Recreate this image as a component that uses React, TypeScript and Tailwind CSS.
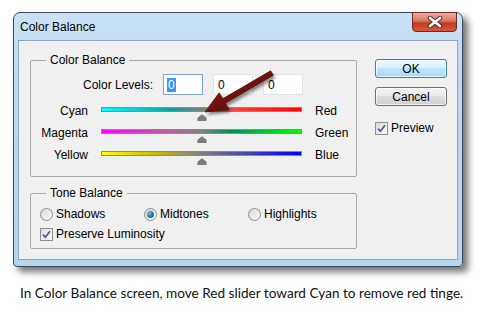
import React from 'react';

const Thumb: React.FC = () => (
  <svg width="10" height="7" viewBox="0 0 10 7" className="mx-auto mt-[2px] block">
    <path d="M5 0.3 L9.3 3.6 Q9.6 3.9 9.6 4.4 V7 H0.4 V4.4 Q0.4 3.9 0.7 3.6 Z" fill="#7c7c7c" />
  </svg>
);

const Check: React.FC = () => (
  <span className="flex h-[13px] w-[13px] items-center justify-center border border-[#8e8f8f] bg-gradient-to-br from-[#dcdcdc] to-[#fbfbfb]">
    <svg width="9" height="9" viewBox="0 0 9 9">
      <path d="M1 4.6 L3.4 7.2 L8 1.2" fill="none" stroke="#4a5f97" strokeWidth="1.8" />
    </svg>
  </span>
);

const Radio: React.FC<{ on?: boolean }> = ({ on }) => (
  <span className="flex h-[13px] w-[13px] items-center justify-center rounded-full border border-[#8e8f8f] bg-gradient-to-br from-[#d8d8d8] to-[#fafafa]">
    {on && <span className="h-[7px] w-[7px] rounded-full bg-[radial-gradient(circle_at_35%_35%,#7ec3e8,#1d6a92_60%,#0f4466)]" />}
  </span>
);

const sliders = [
  { left: 'Cyan', right: 'Red', bar: 'bg-[linear-gradient(to_right,#00ffff,#0e9e9e_35%,#808080_52%,#ff3a3a_68%,#ff0000)]' },
  { left: 'Magenta', right: 'Green', bar: 'bg-[linear-gradient(to_right,#ff00ff,#c05aa6_30%,#808080_50%,#00905a_65%,#00ff00)]' },
  { left: 'Yellow', right: 'Blue', bar: 'bg-[linear-gradient(to_right,#ffff00,#c8c000_25%,#808080_50%,#4a4aa8_70%,#0000ff)]' },
];

const App: React.FC = () => {
  return (
    <div className="relative h-[330px] w-[500px] overflow-hidden bg-white font-['Liberation_Sans',Arial,sans-serif] text-[12px] text-black">
      {/* Dialog window */}
      <div className="ml-[13px] mt-[12px] flex h-[255px] w-[450px] flex-col rounded-t-[7px] rounded-b-[4px] border border-[#3f4a56] bg-[linear-gradient(to_bottom,#c9e2f7,#bcd9f2_30%,#b6d5f0)] shadow-[5px_5px_7px_rgba(0,0,0,0.55)]">
        {/* Title bar */}
        <div className="flex h-[27px] items-start justify-between">
          <span className="pl-[6px] pt-[7px] leading-[14px]">Color Balance</span>
          <div className="mr-[5px] mt-[-1px] flex h-[20px] w-[45px] items-center justify-center rounded-b-[4px] border border-[#6e2a22] bg-[linear-gradient(to_bottom,#eab0a2,#d9715d_45%,#c53a22_55%,#d5573c)]">
            <svg width="16" height="12" viewBox="0 0 16 12">
              <path d="M3 2 L13 10 M13 2 L3 10" stroke="#4a2a26" strokeWidth="4.4" strokeLinecap="round" />
              <path d="M3 2 L13 10 M13 2 L3 10" stroke="#ffffff" strokeWidth="2.6" strokeLinecap="round" />
            </svg>
          </div>
        </div>

        {/* Client area */}
        <div className="mx-[4px] flex h-[220px] border border-[#8fa8c0] bg-[#f0f0f0] pl-[11px] pt-[12px]">
          <div className="flex w-[327px] flex-col">
            <fieldset className="h-[124px] rounded-[2px] border border-[#a9a9a9] px-0">
              <legend className="ml-[15px] px-[4px] leading-[14px]">Color Balance</legend>
              <div className="mt-[7px] flex items-center">
                <span className="w-[122px] text-right">Color Levels:</span>
                <div className="ml-[10px] flex gap-[10px]">
                  <div className="flex h-[21px] w-[40px] items-center border border-[#7ea7d4] bg-white pl-[3px]">
                    <span className="bg-[#3399ff] px-[1px] leading-[14px] text-white">0</span>
                  </div>
                  <div className="flex h-[21px] w-[40px] items-center border border-[#dfe4ea] bg-white pl-[4px]">0</div>
                  <div className="flex h-[21px] w-[40px] items-center border border-[#dfe4ea] bg-white pl-[4px]">0</div>
                </div>
              </div>
              <div className="mt-[9px] flex flex-col">
                {sliders.map((s) => (
                  <div key={s.left} className="flex h-[22px] items-start">
                    <span className="w-[57px] text-right leading-[14px]">{s.left}</span>
                    <div className="ml-[13px] w-[201px] pt-[3px]">
                      <div className={`h-[5px] border border-[#8a8a8a] ${s.bar}`} />
                      <Thumb />
                    </div>
                    <span className="ml-[13px] leading-[14px]">{s.right}</span>
                  </div>
                ))}
              </div>
            </fieldset>

            <fieldset className="mt-[9px] h-[63px] rounded-[2px] border border-[#a9a9a9] px-0">
              <legend className="ml-[15px] px-[4px] leading-[14px]">Tone Balance</legend>
              <div className="mt-[7px] flex pl-[9px] leading-[14px]">
                <label className="flex w-[104px] items-center gap-[3px]">
                  <Radio />
                  Shadows
                </label>
                <label className="flex w-[104px] items-center gap-[3px]">
                  <Radio on />
                  Midtones
                </label>
                <label className="flex items-center gap-[3px]">
                  <Radio />
                  Highlights
                </label>
              </div>
              <label className="mt-[6px] flex items-center gap-[3px] pl-[9px] leading-[14px]">
                <Check />
                Preserve Luminosity
              </label>
            </fieldset>
          </div>

          <div className="ml-[18px] flex w-[72px] flex-col pt-[6px]">
            <button className="h-[19px] rounded-[3px] border border-[#3c7fb1] bg-[linear-gradient(to_bottom,#eaf6fd,#d9f0fc_45%,#bee6fd_50%,#a7d9f5)] leading-[14px] shadow-[inset_0_0_0_1px_rgba(255,255,255,0.7)]">
              OK
            </button>
            <button className="mt-[9px] h-[19px] rounded-[3px] border border-[#707070] bg-[linear-gradient(to_bottom,#f2f2f2,#ebebeb_45%,#dddddd_50%,#cfcfcf)] leading-[14px] shadow-[inset_0_0_0_1px_rgba(255,255,255,0.7)]">
              Cancel
            </button>
            <label className="mt-[15px] flex items-center gap-[3px] leading-[14px]">
              <Check />
              Preview
            </label>
          </div>
        </div>
      </div>

      <p className="ml-[20px] mt-[18px] font-['Lato',sans-serif] text-[13.6px] leading-[16px] text-[#111]">
        In Color Balance screen, move Red slider toward Cyan to remove red tinge.
      </p>

      {/* Callout arrow */}
      <svg className="pointer-events-none absolute left-0 top-0" width="500" height="330" viewBox="0 0 500 330">
        <defs>
          <filter id="blur" x="-20%" y="-20%" width="140%" height="140%">
            <feGaussianBlur stdDeviation="1.6" />
          </filter>
          <linearGradient id="ar" x1="0" y1="0" x2="1" y2="1">
            <stop offset="0" stopColor="#9b2c22" />
            <stop offset="0.5" stopColor="#6e120b" />
            <stop offset="1" stopColor="#4f0905" />
          </linearGradient>
        </defs>
        <polygon
          points="205,112 219.2,92.8 222.7,98.8 270.7,70.8 273.3,75.2 225.3,103.2 228.8,109.2"
          fill="#000"
          opacity="0.45"
          filter="url(#blur)"
          transform="translate(2,3)"
        />
        <polygon
          points="205,112 219.2,92.8 222.7,98.8 270.7,70.8 273.3,75.2 225.3,103.2 228.8,109.2"
          fill="url(#ar)"
          stroke="#5a0c07"
          strokeWidth="0.8"
          strokeLinejoin="round"
        />
      </svg>
    </div>
  );
};

export default App;
